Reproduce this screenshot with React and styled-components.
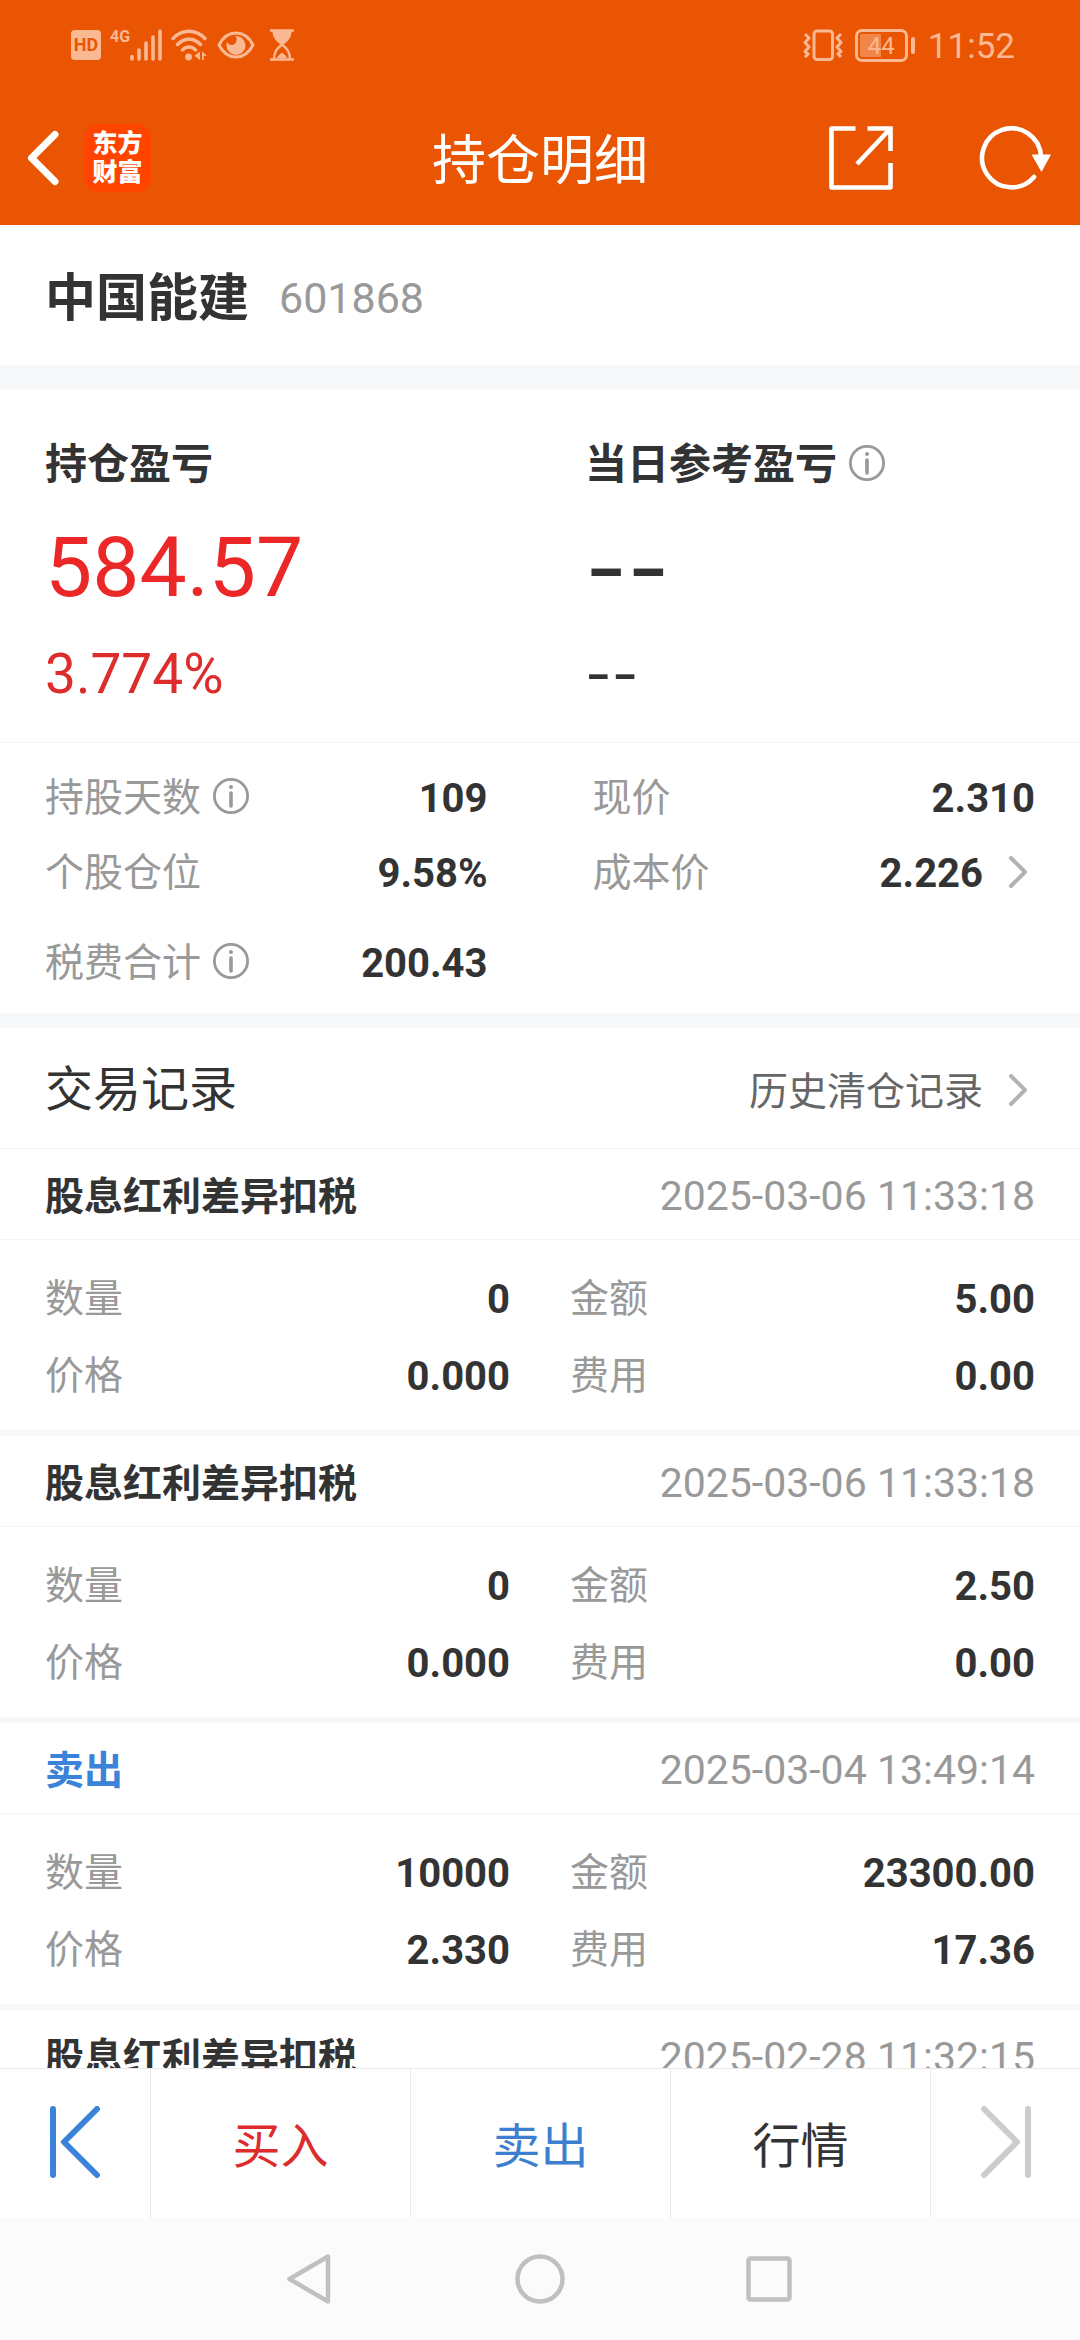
import React from 'react'
import styled, { createGlobalStyle } from 'styled-components'

const summary = [
    { id: 'days', label: '持股天数', value: '109', info: true },
    { id: 'price', label: '现价', value: '2.310' },
    { id: 'position', label: '个股仓位', value: '9.58%' },
    { id: 'cost', label: '成本价', value: '2.226', more: true },
]

const fees = [
    { id: 'fees', label: '税费合计', value: '200.43', info: true },
]

const records = [
    { id: 1, title: '股息红利差异扣税', time: '2025-03-06 11:33:18', qty: '0', amount: '5.00', price: '0.000', fee: '0.00' },
    { id: 2, title: '股息红利差异扣税', time: '2025-03-06 11:33:18', qty: '0', amount: '2.50', price: '0.000', fee: '0.00' },
    { id: 3, title: '卖出', sell: true, time: '2025-03-04 13:49:14', qty: '10000', amount: '23300.00', price: '2.330', fee: '17.36' },
    { id: 4, title: '股息红利差异扣税', time: '2025-02-28 11:32:15' },
]

const InfoIcon = () => (
    <LineIcon width="36" height="36" viewBox="0 0 36 36" fill="none" stroke="#999" aria-hidden="true">
        <circle cx="18" cy="18" r="16.6" strokeWidth="2.8" />
        <path d="M18 15v13" strokeWidth="3.6" strokeLinecap="round" />
        <circle cx="18" cy="9" r="2" fill="#999" stroke="none" />
    </LineIcon>
)

const MoreIcon = () => (
    <LineIcon width="36" height="36" viewBox="0 0 36 36" fill="none" stroke="#b2b2b2" strokeWidth="4" strokeLinecap="round" strokeLinejoin="round" aria-hidden="true">
        <path d="M12 4l14 14-14 14" />
    </LineIcon>
)

const StatusBar = () => (
    <Status>
        <StatusGroup>
            <Hd>HD</Hd>
            <Network>4G</Network>
            <svg width="32" height="32" viewBox="0 0 32 32" stroke="currentColor" strokeWidth="3.6" strokeLinecap="round">
                <path d="M2 27.5v2.5M9 21v9M16 14v16M23 8v22M30 2v28" />
            </svg>
            <Wifi width="36" height="32" viewBox="0 0 36 32" fill="none" stroke="currentColor" strokeWidth="3.4" strokeLinecap="round">
                <path d="M2 9.5C11-.2 25-.2 34 9.5M6.500 15.500c6.500-7 16.500-7 23 0M11.500 21c3.500-4 9.500-4 13 0" />
                <circle cx="17.500" cy="28" r="3.400" fill="currentColor" stroke="none" />
                <path d="M29 22.500v8.500l-5.500-4.300zM31 22.500l5 4.300h-3.200V31H31z" fill="currentColor" stroke="none" />
            </Wifi>
            <Eye width="38" height="28" viewBox="0 0 38 28" fill="none">
                <path d="M2 14C10-2 28-2 36 14 28 30 10 30 2 14z" stroke="currentColor" strokeWidth="3" strokeLinejoin="round" />
                <path d="M18 5a9.500 9.500 0 1 1-8.500 9c0-1 .3-2 .8-3 1.200 3.500 6.200 4 8.200 1s1.200-5.500-.5-7z" fill="currentColor" />
            </Eye>
            <Hourglass width="24" height="32" viewBox="0 0 24 32" fill="none" stroke="currentColor" strokeWidth="2.400">
                <path d="M0 1.500h24M0 30.500h24" />
                <path d="M2.500 2h19c0 7-3.500 10-8 13.500h-3C6 12 2.500 9 2.500 2z" fill="currentColor" stroke="none" />
                <path d="M4 30c0-7 3-10.500 8-14.500 5 4 8 7.500 8 14.500" />
                <path d="M7 29c1-3 3-3.500 5-5.500 2 2 4 2.500 5 5.500z" fill="currentColor" stroke="none" />
            </Hourglass>
        </StatusGroup>
        <StatusGroup>
            <svg width="40" height="32" viewBox="0 0 40 32" fill="none" stroke="currentColor" strokeWidth="3" strokeLinejoin="round">
                <rect x="11" y="2" width="18.500" height="28.500" rx="3" />
                <path d="M2 5l4 4-4 4.500L6 18l-4 4.500L5 25l-3 3M38 5l-4 4 4 4.500-4 4.500 4 4.500-3 2.500 3 3" />
            </svg>
            <Battery>
                <BatteryBody>44</BatteryBody>
                <BatteryCap />
            </Battery>
            <Clock>11:52</Clock>
        </StatusGroup>
    </Status>
)

const Stat = ({ item }) => (
    <Pair $tall={75}>
        <Term>{item.label}{item.info && <InfoIcon />}</Term>
        <Value>{item.value}{item.more && <MoreIcon />}</Value>
    </Pair>
)

const Record = ({ record }) => {
    const cells = [
        ['数量', record.qty],
        ['金额', record.amount],
        ['价格', record.price],
        ['费用', record.fee],
    ]
    return (
        <RecordItem>
            <RecordHead>
                <RecordTitle $sell={record.sell}>{record.title}</RecordTitle>
                <time>{record.time}</time>
            </RecordHead>
            {record.qty && (
                <RecordBody>
                    {cells.map(([label, value]) => (
                        <Pair key={label} $tall={77}>
                            <Term>{label}</Term>
                            <Value>{value}</Value>
                        </Pair>
                    ))}
                </RecordBody>
            )}
        </RecordItem>
    )
}

const App = () => {
    return (
        <>
            <GlobalStyle />
            <Page>
                <Header>
                    <StatusBar />
                    <Toolbar>
                        <ToolGroup>
                            <IconButton type="button" aria-label="返回">
                                <svg width="33" height="60" viewBox="0 0 33 60" fill="none" stroke="#fff" strokeWidth="7" strokeLinecap="round" strokeLinejoin="round">
                                    <path d="M28 6.500L4.500 30 28 53.500" />
                                </svg>
                            </IconButton>
                            <Logo>东方<br />财富</Logo>
                        </ToolGroup>
                        <Title>持仓明细</Title>
                        <ToolGroup $end>
                            <IconButton type="button" aria-label="分享">
                                <svg width="64" height="64" viewBox="0 0 64 64" fill="none" stroke="#fff" strokeWidth="4.600" strokeLinejoin="round">
                                    <path d="M26.500 2.500h-24v59h59V37" />
                                    <path d="M38.500 2.500h23v22.500M61 3L28 38" strokeLinejoin="miter" />
                                </svg>
                            </IconButton>
                            <IconButton type="button" aria-label="刷新">
                                <svg width="74" height="64" viewBox="0 0 74 64" fill="none" stroke="#fff" strokeWidth="4.600" strokeLinecap="round">
                                    <path d="M55 51A29.500 29.500 0 1 1 62 30" />
                                    <path d="M52.500 28.500H72L62.500 46z" fill="#fff" stroke="none" />
                                </svg>
                            </IconButton>
                        </ToolGroup>
                    </Toolbar>
                </Header>

                <Content>
                    <Stock>
                        <StockName>中国能建</StockName>
                        <StockCode>601868</StockCode>
                    </Stock>

                    <Profit>
                        <ProfitCell>
                            <ProfitLabel>持仓盈亏</ProfitLabel>
                            <Amount>584.57</Amount>
                            <Percent>3.774%</Percent>
                        </ProfitCell>
                        <ProfitCell>
                            <ProfitLabel>当日参考盈亏<InfoIcon /></ProfitLabel>
                            <Amount $empty>--</Amount>
                            <Percent $empty>--</Percent>
                        </ProfitCell>
                    </Profit>

                    <Summary>
                        <StatGrid>{summary.map(item => <Stat key={item.id} item={item} />)}</StatGrid>
                        <StatGrid>{fees.map(item => <Stat key={item.id} item={item} />)}</StatGrid>
                    </Summary>

                    <History>
                        <HistoryTitle>交易记录</HistoryTitle>
                        <HistoryLink href="#history">历史清仓记录<MoreIcon /></HistoryLink>
                    </History>
                    {records.map(record => <Record key={record.id} record={record} />)}
                </Content>

                <ActionBar>
                    <Action type="button" $icon aria-label="上一个">
                        <svg width="52" height="76" viewBox="0 0 52 76" fill="none" stroke="#3b82d9" strokeWidth="6" strokeLinecap="round" strokeLinejoin="round">
                            <path d="M4 3v66M48 3L15 36l33 33" />
                        </svg>
                    </Action>
                    <Action type="button" $color="#dd2c2c">买入</Action>
                    <Action type="button" $color="#3d7fcf">卖出</Action>
                    <Action type="button">行情</Action>
                    <Action type="button" $icon aria-label="下一个">
                        <svg width="52" height="76" viewBox="0 0 52 76" fill="none" stroke="#ccc" strokeWidth="6" strokeLinecap="round" strokeLinejoin="round">
                            <path d="M48 3v66M4 3l33 33L4 69" />
                        </svg>
                    </Action>
                </ActionBar>

                <SystemNav>
                    <IconButton type="button" aria-label="后退">
                        <svg width="50" height="50" viewBox="0 0 50 50" fill="none" stroke="#c0c0c0" strokeWidth="4.500" strokeLinejoin="round">
                            <path d="M43 2.500v45L4.500 25z" />
                        </svg>
                    </IconButton>
                    <IconButton type="button" aria-label="主屏幕">
                        <svg width="50" height="50" viewBox="0 0 50 50" fill="none" stroke="#c0c0c0" strokeWidth="4.500">
                            <circle cx="25" cy="25" r="22.500" />
                        </svg>
                    </IconButton>
                    <IconButton type="button" aria-label="最近任务">
                        <svg width="50" height="50" viewBox="0 0 50 50" fill="none" stroke="#c0c0c0" strokeWidth="4.500">
                            <rect x="3.500" y="4.500" width="41" height="41" rx="2" />
                        </svg>
                    </IconButton>
                </SystemNav>
            </Page>
        </>
    )
}

export default App

const GlobalStyle = createGlobalStyle`
    *{
        box-sizing:border-box;
        margin:0;
    }
    body{
        background-color:#fff;
        color:#333;
        font-family: Roboto, "Noto Sans CJK SC", sans-serif;
        font-size:39px;
        line-height:1.2;
    }
    svg{
        display:block;
        flex:none;
    }
`

const LineIcon = styled.svg`
    margin-bottom:4px;
`

const Page = styled.div`
    display:flex;
    flex-direction:column;
    height:100vh;
`

const Header = styled.header`
    background-color:#ea5504;
    color:#fff;
`

const Status = styled.div`
    display:flex;
    justify-content:space-between;
    height:90px;
    padding:0 65px 0 71px;
    color:#fab992;
`

const StatusGroup = styled.div`
    display:flex;
    align-items:center;
`

const Hd = styled.span`
    width:30px;
    border-radius:4px;
    background-color:#fab992;
    color:#ea5504;
    font-size:18px;
    font-weight:700;
    line-height:30px;
    text-align:center;
`

const Network = styled.span`
    align-self:flex-start;
    margin:27px 0 0 9px;
    font-size:16px;
    font-weight:700;
    line-height:20px;
`

const Wifi = styled.svg`
    margin-left:9px;
`

const Eye = styled.svg`
    margin-left:10px;
`

const Hourglass = styled.svg`
    margin-left:15px;
`

const Battery = styled.div`
    display:flex;
    align-items:center;
    gap:3px;
    margin:0 13px 0 12px;
`

const BatteryBody = styled.div`
    width:53px;
    height:33px;
    padding:2px;
    border:3px solid currentColor;
    border-radius:7px;
    background:linear-gradient(90deg, #f28549 21px, transparent 21px) content-box;
    font-size:24px;
    line-height:24px;
    text-align:center;
`

const BatteryCap = styled.div`
    width:4px;
    height:17px;
    border-radius:2px;
    background-color:currentColor;
`

const Clock = styled.span`
    padding-top:4px;
    font-size:35px;
`

const Toolbar = styled.div`
    display:grid;
    grid-template-columns:1fr auto 1fr;
    align-items:center;
    height:135px;
    padding:0 27px;
`

const ToolGroup = styled.div`
    display:flex;
    align-items:center;
    justify-content:${props => props.$end ? 'flex-end' : 'flex-start'};
    gap:${props => props.$end ? '86px' : '24px'};
`

const IconButton = styled.button`
    padding:0;
    border:none;
    background:none;
    cursor:pointer;
`

const Logo = styled.span`
    width:67px;
    padding:5px 0;
    border-radius:14px;
    background-color:#ff4400;
    font-size:25px;
    font-weight:900;
    line-height:29px;
    text-align:center;
`

const Title = styled.h1`
    padding-top:10px;
    font-size:54px;
    font-weight:400;
`

const Content = styled.main`
    flex:1;
    min-height:0;
    overflow-y:auto;
    scrollbar-width:none;
`

const Stock = styled.section`
    display:flex;
    align-items:center;
    gap:30px;
    height:164px;
    padding:8px 45px 0;
    border-bottom:24px solid #f6f8fa;
`

const StockName = styled.h2`
    font-size:51px;
`

const StockCode = styled.span`
    color:#999;
    font-size:43px;
`

const Profit = styled.section`
    display:grid;
    grid-template-columns:1fr 1fr;
    padding:46px 0 38px;
    border-bottom:1px solid #f5f5f5;
`

const ProfitCell = styled.div`
    padding:0 45px;
`

const ProfitLabel = styled.h3`
    display:flex;
    align-items:center;
    gap:12px;
    font-size:42px;
    line-height:60px;
`

const Amount = styled.p`
    margin:23px 0 26px;
    color:${props => props.$empty ? '#333' : '#eb2727'};
    font-family:${props => props.$empty ? 'Inter' : 'Roboto'}, sans-serif;
    font-size:${props => props.$empty ? '92px' : '84px'};
    line-height:100px;
`

const Percent = styled.p`
    color:${props => props.$empty ? '#333' : '#dc2c2c'};
    font-family:${props => props.$empty ? 'Inter' : 'Roboto'}, sans-serif;
    font-size:${props => props.$empty ? '58px' : '55px'};
    line-height:60px;
`

const Summary = styled.section`
    padding:18px 45px 12px;
    border-bottom:15px solid #f6f8fa;
`

const StatGrid = styled.dl`
    display:grid;
    grid-template-columns:1fr 1fr;
    column-gap:105px;
    & + &{
        margin-top:15px;
    }
`

const Pair = styled.div`
    display:flex;
    align-items:center;
    justify-content:space-between;
    height:${props => props.$tall}px;
`

const Term = styled.dt`
    display:flex;
    align-items:center;
    gap:12px;
    color:#999;
`

const Value = styled.dd`
    display:flex;
    align-items:center;
    gap:16px;
    font-size:40px;
    font-weight:700;
`

const History = styled.div`
    display:flex;
    align-items:center;
    justify-content:space-between;
    height:121px;
    padding:4px 45px 0;
    border-bottom:1px solid #f5f5f5;
`

const HistoryTitle = styled.h2`
    font-size:48px;
    font-weight:400;
`

const HistoryLink = styled.a`
    display:flex;
    align-items:center;
    gap:16px;
    padding-top:4px;
    color:#666;
    text-decoration:none;
`

const RecordItem = styled.article`
    border-bottom:6px solid #f6f8fa;
`

const RecordHead = styled.div`
    display:flex;
    align-items:center;
    justify-content:space-between;
    height:91px;
    padding:6px 45px 0;
    border-bottom:1px solid #f5f5f5;
    color:#999;
    font-size:41px;
`

const RecordTitle = styled.h3`
    color:${props => props.$sell ? '#3b82d9' : '#333'};
    font-size:39px;
`

const RecordBody = styled.dl`
    display:grid;
    grid-template-columns:1fr 1fr;
    column-gap:60px;
    padding:21px 45px 15px;
`

const ActionBar = styled.nav`
    display:flex;
    height:150px;
    border-top:1px solid #e8e8e8;
`

const Action = styled.button`
    display:flex;
    align-items:center;
    justify-content:center;
    flex:${props => props.$icon ? '0 0 150px' : '1'};
    padding:${props => props.$icon ? '0' : '6px 0 0'};
    border:none;
    background:none;
    color:${props => props.$color || '#333'};
    font-family:inherit;
    font-size:48px;
    line-height:1.2;
    cursor:pointer;
    & + &{
        border-left:1px solid #ebebeb;
    }
`

const SystemNav = styled.nav`
    display:flex;
    align-items:center;
    justify-content:center;
    gap:180px;
    height:122px;
    background-color:#fbfbfb;
`
